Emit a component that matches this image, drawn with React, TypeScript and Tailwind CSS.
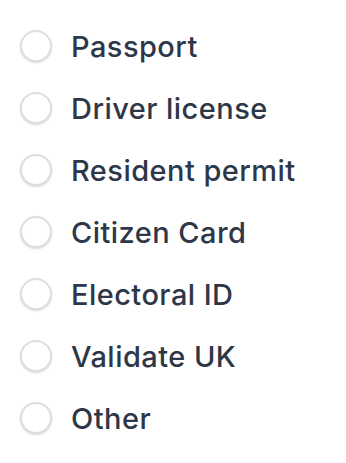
const options = [
  'Passport',
  'Driver license',
  'Resident permit',
  'Citizen Card',
  'Electoral ID',
  'Validate UK',
  'Other',
]

export default function App() {
  return (
    <div className="min-h-screen bg-white pl-5 pt-[15px] font-['Inter',sans-serif]">
      <ul className="flex flex-col">
        {options.map((label) => (
          <li key={label} className="flex h-[62px] items-center gap-[19px]">
            <span className="h-[32px] w-[32px] shrink-0 rounded-full border-2 border-[#dcdee2] bg-white shadow-[0_1px_2px_rgba(0,0,0,0.15)]" />
            <span className="text-[29px] font-[450] leading-none tracking-[0.45px] text-[#2d3748]">{label}</span>
          </li>
        ))}
      </ul>
    </div>
  )
}
